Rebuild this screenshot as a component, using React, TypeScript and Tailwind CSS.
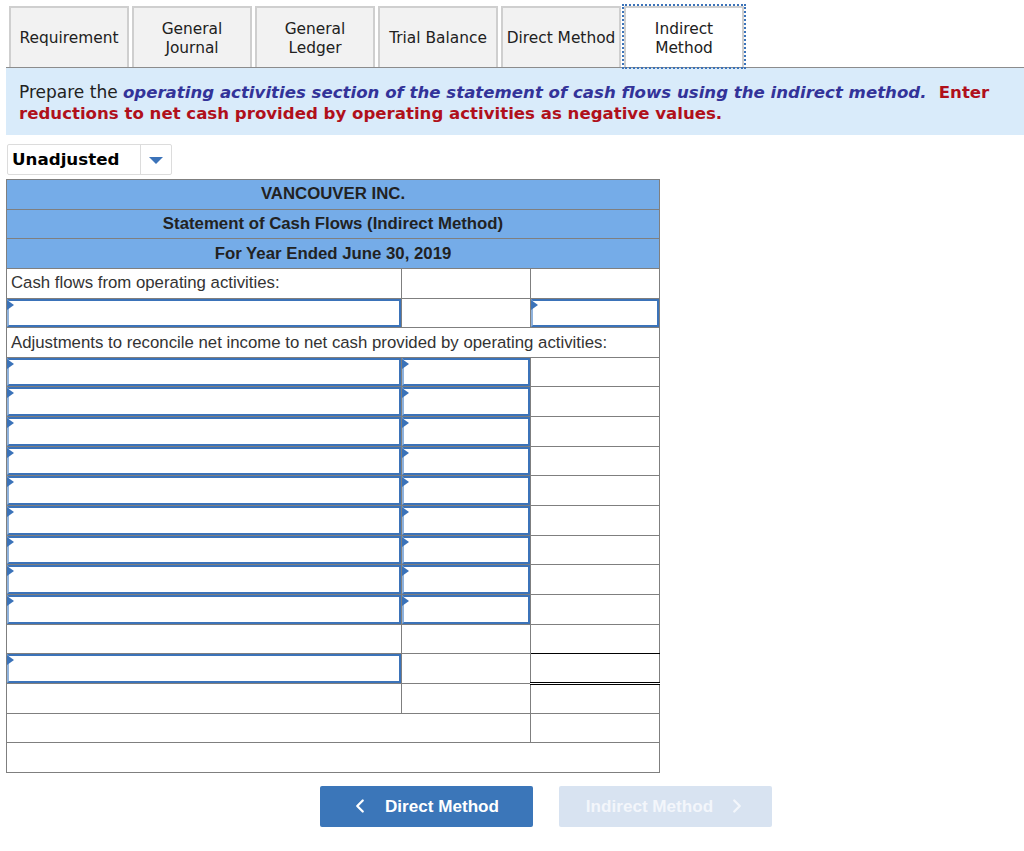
import { ChevronLeft, ChevronRight } from "lucide-react";

const tabs = [
  { label: "Requirement" },
  { label: "General Journal", lines: ["General", "Journal"] },
  { label: "General Ledger", lines: ["General", "Ledger"] },
  { label: "Trial Balance" },
  { label: "Direct Method" },
];

const titles = [
  { text: "VANCOUVER INC.", className: "" },
  { text: "Statement of Cash Flows (Indirect Method)", className: "" },
  { text: "For Year Ended June 30, 2019", className: "pt-[2px]" },
];

// one entry per plain row: which of the three cells are inputs
const inputRow = [true, true, false];

const InputCell = () => (
  <div className="relative h-full w-full border-2 border-[#3b73b9] border-l-[#8fb2dc] bg-white">
    <span className="absolute left-[-2px] top-[-1px] h-0 w-0 border-y-[5px] border-l-[7px] border-y-transparent border-l-[#3b73b9]" />
  </div>
);

const Cell = ({ input, className = "" }: { input?: boolean; className?: string }) => (
  <td className={`h-[29.65px] border border-[#7f7f7f] p-0 ${className}`}>
    {input ? <InputCell /> : null}
  </td>
);

const App = () => {
  return (
    <div className="h-[851px] w-[1024px] overflow-hidden bg-white font-['DejaVu_Sans',sans-serif] text-[#212121]">
      {/* Tabs */}
      <div className="flex h-[67px] items-end gap-[3px] pl-[9px]">
        {tabs.map((tab) => (
          <div
            key={tab.label}
            className="flex h-[61px] w-[120px] items-center justify-center whitespace-nowrap border-2 border-b-0 border-[#cfcfcf] bg-[#f2f2f2] pt-[1px] text-center text-[15.4px] leading-[19px]"
          >
            {tab.lines ? (
              <div className="mt-[1px]">
                <div>{tab.lines[0]}</div>
                <div>{tab.lines[1]}</div>
              </div>
            ) : (
              tab.label
            )}
          </div>
        ))}
        <div className="flex h-[61px] w-[120px] items-center justify-center border-2 border-b-0 border-[#cfcfcf] bg-white pt-[1px] text-center text-[15.4px] leading-[19px] outline-2 outline-dotted outline-[#3b73b9]">
          <div className="mt-[1px]">
            <div>Indirect</div>
            <div>Method</div>
          </div>
        </div>
      </div>

      {/* Instructions */}
      <div className="ml-[6px] h-[68px] border-t border-[#8c8c8c] bg-[#d9ebfa] px-[13px] pt-[14px] text-[16.6px] leading-[20.5px]">
        <div className="whitespace-nowrap">
          <span className="text-[17px]">Prepare the</span>{" "}
          <b className="italic text-[#333399]">
            operating activities section of the statement of cash flows using the indirect method.
          </b>{" "}
          <b className="ml-[7px] text-[#b0101b]">Enter</b>
        </div>
        <b className="block text-[#b0101b]">reductions to net cash provided by operating activities as negative values.</b>
      </div>

      {/* Dropdown */}
      <div className="ml-[7px] mt-[9px] flex h-[31px] w-[165px] rounded-[2px] border border-[#dcdcdc] bg-white">
        <div className="flex flex-1 items-center pl-[4px] pt-[1px] text-[16.7px] font-bold text-black">Unadjusted</div>
        <div className="flex w-[31px] items-center justify-center border-l border-[#dcdcdc]">
          <span className="mt-[1px] h-0 w-0 border-x-[7px] border-t-[7px] border-x-transparent border-t-[#3b73b9]" />
        </div>
      </div>

      {/* Statement */}
      <table className="ml-[6px] mt-[4px] w-[653px] table-fixed border-collapse font-['Liberation_Sans',sans-serif] text-[16.8px] text-[#333]">
        <colgroup>
          <col className="w-[395px]" />
          <col className="w-[129px]" />
          <col className="w-[129px]" />
        </colgroup>
        <tbody>
          {titles.map((title) => (
            <tr key={title.text}>
              <td colSpan={3} className={`h-[29.65px] border border-[#7f7f7f] bg-[#75ace8] p-0 text-center font-bold leading-none text-[#222] ${title.className}`}>
                {title.text}
              </td>
            </tr>
          ))}
          <tr>
            <td className="h-[29.65px] border border-[#7f7f7f] p-0 pl-[4px] leading-none">Cash flows from operating activities:</td>
            <Cell />
            <Cell />
          </tr>
          <tr>
            <Cell input />
            <Cell />
            <Cell input />
          </tr>
          <tr>
            <td colSpan={3} className="h-[29.65px] border border-[#7f7f7f] p-0 pl-[4px] pt-[2px] leading-none">
              Adjustments to reconcile net income to net cash provided by operating activities:
            </td>
          </tr>
          {Array.from({ length: 9 }).map((_, i) => (
            <tr key={i}>
              {inputRow.map((input, j) => (
                <Cell key={j} input={input} />
              ))}
            </tr>
          ))}
          <tr>
            <Cell />
            <Cell />
            <Cell className="border-b-black" />
          </tr>
          <tr>
            <Cell input />
            <Cell />
            <td className="h-[29.65px] border border-[#7f7f7f] border-b-[3px] border-t-black border-b-black p-0 [border-bottom-style:double]" />
          </tr>
          <tr>
            <Cell />
            <Cell />
            <Cell />
          </tr>
          <tr>
            <td colSpan={2} className="h-[29.65px] border border-[#7f7f7f] p-0" />
            <Cell />
          </tr>
          <tr>
            <td colSpan={3} className="h-[29.65px] border border-[#7f7f7f] p-0" />
          </tr>
        </tbody>
      </table>

      {/* Nav buttons */}
      <div className="ml-[320px] mt-[13px] flex gap-[26px] font-['Liberation_Sans',sans-serif] text-[17.1px] font-bold text-white">
        <div className="flex h-[41px] w-[213px] items-center justify-center gap-[14px] rounded-[2px] bg-[#3b76b9] pr-[5px]">
          <ChevronLeft size={22} strokeWidth={2.5} />
          <span className="pt-[1px]">Direct Method</span>
        </div>
        <div className="flex h-[41px] w-[213px] items-center justify-center gap-[13px] rounded-[2px] bg-[#d8e3f1] pl-[3px] text-[#f3f6fb]">
          <span className="pt-[1px]">Indirect Method</span>
          <ChevronRight size={22} strokeWidth={2.5} />
        </div>
      </div>
    </div>
  );
};

export default App;
